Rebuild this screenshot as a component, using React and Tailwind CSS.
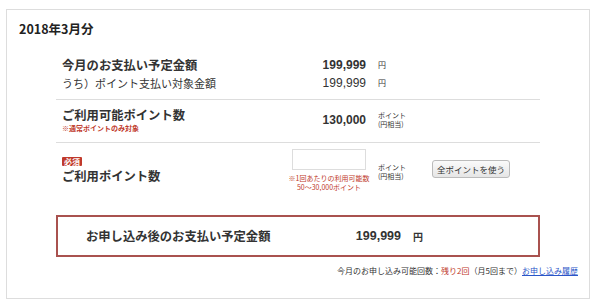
export default function App() {
  const font = { fontFamily: '"Noto Sans CJK JP", "Noto Sans", sans-serif' };
  const num = { fontFamily: '"Liberation Sans", Arial, sans-serif' };
  return (
    <div className="w-[600px] h-[305px] bg-white pt-[9px] pl-[6px] text-[#333]" style={font}>
      <div className="w-[584px] h-[290px] border border-[#ddd]">
        <div className="pt-[9px] pl-[12px] text-[12.5px] leading-[20px] font-bold text-[#222]">2018年3月分</div>
        <div className="mx-[49px] mt-[17px]">
          {/* section 1 */}
          <div className="border-b border-[#ddd] pb-[7px]">
            <div className="flex items-center h-[18px]">
              <div className="w-[236px] pl-[6px] text-[12.3px] font-bold">今月のお支払い予定金額</div>
              <div className="w-[74px] text-right text-[12px] font-bold" style={num}>199,999</div>
              <div className="ml-[12px] text-[8px]">円</div>
            </div>
            <div className="flex items-center h-[18px]">
              <div className="w-[236px] pl-[6px] text-[11px]">うち）ポイント支払い対象金額</div>
              <div className="w-[74px] text-right text-[12px]" style={num}>199,999</div>
              <div className="ml-[12px] text-[8px]">円</div>
            </div>
          </div>
          {/* section 2 */}
          <div className="border-b border-[#ddd] h-[43px] pb-[2px] flex items-center">
            <div className="w-[236px] pl-[6px]">
              <div className="text-[12.3px] font-bold leading-[17px]">ご利用可能ポイント数</div>
              <div className="text-[7px] leading-[9px] font-bold text-[#c0392b]">※通常ポイントのみ対象</div>
            </div>
            <div className="w-[74px] text-right text-[12px] font-bold" style={num}>130,000</div>
            <div className="ml-[12px] text-[7px] leading-[9px]">
              <div>ポイント</div>
              <div>(円相当)</div>
            </div>
          </div>
          {/* section 3 */}
          <div className="flex h-[60px]">
            <div className="w-[236px] pl-[6px] pt-[14px] flex flex-col items-start">
              <div className="bg-[#c0392b] text-white text-[8px] leading-[9px] px-[2px] font-bold rounded-[1px]">必須</div>
              <div className="text-[12.3px] font-bold leading-[16px] mt-[2px]">ご利用ポイント数</div>
            </div>
            <div className="w-[74px] pt-[6px] flex flex-col items-center">
              <div className="w-[74px] h-[21px] border border-[#ddd] bg-white"></div>
              <div className="mt-[4px] text-[7px] leading-[8.5px] text-[#c0392b] text-center whitespace-nowrap -mx-[10px]">
                <div>※1回あたりの利用可能数</div>
                <div>50〜30,000ポイント</div>
              </div>
            </div>
            <div className="ml-[12px] pt-[20px] text-[7px] leading-[9px] w-[54px]">
              <div>ポイント</div>
              <div>(円相当)</div>
            </div>
            <div className="pt-[17px] flex items-start">
              <button className="block h-[18px] px-[4px] text-[8.5px] leading-[16px] border border-[#bbb] rounded-[3px] bg-gradient-to-b from-[#fafafa] to-[#e6e6e6] text-[#333]">全ポイントを使う</button>
            </div>
          </div>
          {/* red box */}
          <div className="mt-[12px] h-[42px] border-2 border-[#a9524f] flex items-center">
            <div className="w-[272px] pl-[28px] text-[12.3px] font-bold">お申し込み後のお支払い予定金額</div>
            <div className="w-[71px] text-right text-[12.5px] font-bold" style={num}>199,999</div>
            <div className="ml-[12px] text-[10px] font-bold">円</div>
          </div>
        </div>
        <div className="mt-[9px] pr-[11px] text-right text-[8px] leading-[10px] text-[#333]">
          今月のお申し込み可能回数：<span className="text-[#c0392b]">残り2回</span>（月5回まで）<span className="text-[#2a55c8] underline">お申し込み履歴</span>
        </div>
      </div>
    </div>
  );
}
